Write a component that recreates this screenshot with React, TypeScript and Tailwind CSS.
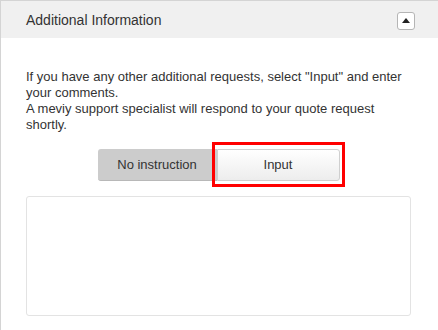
import { useState } from 'react'

export default function App() {
  const [mode, setMode] = useState<'none' | 'input'>('input')

  return (
    <div className="w-[438px] h-[330px] bg-white border-t border-l border-[#d4d4d4] font-['Liberation_Sans',Arial,sans-serif] text-[#333] overflow-hidden">
      {/* Section header */}
      <div className="h-[37px] bg-[#f0f0f0] flex items-center justify-between pl-[25px] pr-[23px]">
        <h2 className="text-[14px] leading-4">Additional Information</h2>
        <button className="w-[18px] h-[18px] mt-[2px] rounded-[3px] border border-[#b5b5b5] bg-white flex items-center justify-center">
          <svg width="8" height="5" viewBox="0 0 8 5">
            <polygon points="4,0 8,5 0,5" fill="#222" />
          </svg>
        </button>
      </div>

      <div className="pl-[25px] pt-[31px] w-[412px]">
        <p className="text-[13px] leading-4 w-[385px]">
          If you have any other additional requests, select "Input" and enter your comments.
          <br />
          A meviy support specialist will respond to your quote request shortly.
        </p>

        {/* Toggle */}
        <div className="flex justify-center mt-[16px] w-[385px]">
          <div className="flex">
            <button
              onClick={() => setMode('none')}
              className="w-[119px] h-[32px] rounded-l-[3px] bg-[#cccccc] border-b border-[#b8b8b8] text-[13px] text-[#333]"
            >
              No instruction
            </button>
            <div className="relative">
              <button
                onClick={() => setMode('input')}
                className="w-[123px] h-[32px] rounded-r-[3px] border border-[#cfcfcf] bg-linear-to-b from-white to-[#ededed] text-[13px] text-[#333]"
              >
                Input
              </button>
              {mode === 'input' && (
                <div className="absolute left-[-5px] right-[-5px] top-[-7px] bottom-[-6px] border-[3px] border-[#f00] pointer-events-none" />
              )}
            </div>
          </div>
        </div>

        <textarea className="block mt-[15px] w-[385px] h-[120px] border border-[#e3e3e3] rounded-[3px] resize-none outline-none" />
      </div>
    </div>
  )
}
